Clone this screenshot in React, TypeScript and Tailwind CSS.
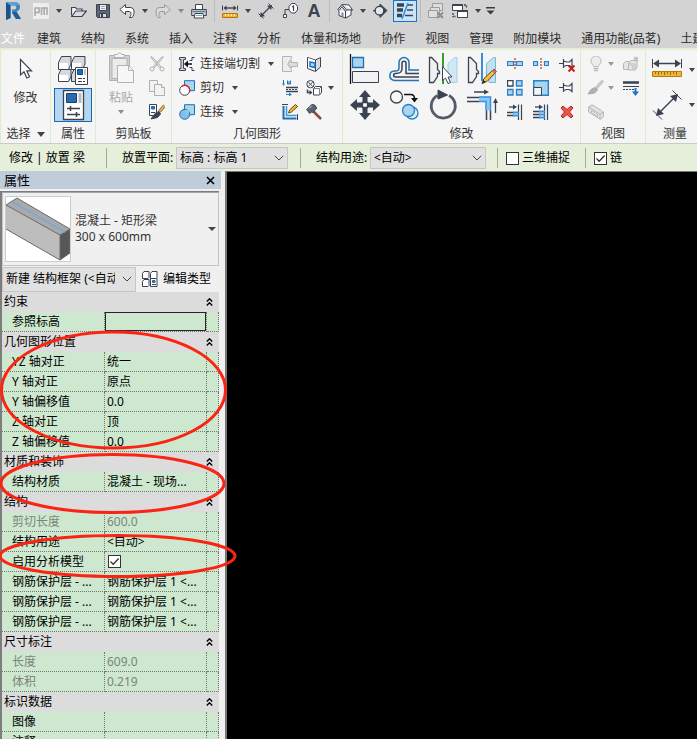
import type { ReactNode } from "react";
import clsx from "clsx";

const INK = "#3b4250";
const BLUE = "#1f6fb5";
const SKY = "#a9d5ee";

/* ---------- shared bits ---------- */

const Svg = ({ size = 16, children }: { size?: number; children: ReactNode }) => (
  <svg width={size} height={size} viewBox={`0 0 ${size} ${size}`} fill="none" stroke={INK} className="shrink-0">
    {children}
  </svg>
);

const Caret = ({ color = "#444444" }: { color?: string }) => (
  <svg width="6" height="4" viewBox="0 0 6 4" className="shrink-0">
    <path d="M0 0h6L3 4z" fill={color} />
  </svg>
);

const Chevron = () => (
  <svg width="10" height="6" viewBox="0 0 10 6" fill="none" stroke="#444444" className="shrink-0">
    <path d="M0.8 0.8L5 5l4.200-4.200" />
  </svg>
);

const IconButton = ({ label, className, children }: { label: string; className?: string; children: ReactNode }) => (
  <button type="button" aria-label={label} className={clsx("flex items-center justify-center", className)}>
    {children}
  </button>
);

const Dropdown = ({ label, value, className }: { label: string; value: string; className?: string }) => (
  <div className={clsx("grid items-center border border-[#c6c6c6] bg-[#e1e1e1]", className)}>
    <select
      aria-label={label}
      className="col-start-1 row-start-1 h-full w-full min-w-0 appearance-none bg-transparent pl-[3px] pr-5 outline-none"
    >
      <option>{value}</option>
    </select>
    <span className="pointer-events-none col-start-1 row-start-1 justify-self-end pr-[3px]">
      <Chevron />
    </span>
  </div>
);

const CheckBox = ({ label, checked = false }: { label: string; checked?: boolean }) => (
  <span className="inline-grid h-[13px] w-[13px] shrink-0 place-items-center">
    <input
      type="checkbox"
      aria-label={label}
      defaultChecked={checked}
      className="peer col-start-1 row-start-1 h-[13px] w-[13px] appearance-none border border-[#333333] bg-white"
    />
    <svg
      viewBox="0 0 11 11"
      fill="none"
      stroke="#333333"
      strokeWidth="1.300"
      className="pointer-events-none invisible col-start-1 row-start-1 h-[11px] w-[11px] peer-checked:visible"
    >
      <path d="M1.500 5.500l2.700 2.700L9.700 2.500" />
    </svg>
  </span>
);

/* ---------- quick access icons ---------- */

const RevitLogo = () => (
  <svg width="18" height="20" viewBox="0 0 18 20">
    <path d="M2 1h8c4 0 6 2 6 5 0 2.500-1.500 4-3.500 4.800L17 18h-5l-4-6.500V8.500h2c1.500 0 2.300-.7 2.300-2S11.500 4.500 10 4.500H6.500V17L2 19z" fill="#3b86c4" />
    <path d="M2 1l4.500 3.500V17L2 19z" fill="#1b5488" />
    <path d="M8 11.500l4.500-.7L17 18h-5z" fill="#205f96" />
    <path d="M2 1h8c3 0 5 1 5.700 3L6.500 4.500z" fill="#5aa3d8" />
  </svg>
);

const PmLogo = () => (
  <svg width="16" height="16" viewBox="0 0 16 16">
    <rect width="16" height="16" rx="1" fill="#eeeeee" />
    <path d="M2 13V5h4v4.500H2M8.500 12V5h5.500v7M11.200 5v7" fill="none" stroke="#ababab" strokeWidth="1.600" />
  </svg>
);

const FolderIcon = () => (
  <Svg>
    <path d="M.5 12.500v-8h4l1 1.500h5.500v2" fill="#f5f5f5" strokeWidth="1.200" />
    <path d="M.7 13.500l4-5.500H15.500l-4.500 5.500z" fill="#d9dde2" strokeWidth="1.200" />
  </Svg>
);

const SaveIcon = () => (
  <Svg>
    <path d="M1.500 1.500h13v13h-12l-1-1z" fill="#5c6879" />
    <path d="M4.500 1.500h7v6h-7z" fill="#f4f4f4" />
    <path d="M6 3.500h4M6 5.500h4" stroke="#9aa1ab" />
    <path d="M4.500 10.500h7v4h-7z" fill="#d9d9d9" />
    <path d="M6 11h2v3H6z" fill={INK} stroke="none" />
  </Svg>
);

const UndoIcon = ({ muted = false }: { muted?: boolean }) => (
  <svg
    width="16"
    height="16"
    viewBox="0 0 16 16"
    stroke={muted ? "#999999" : INK}
    fill={muted ? "#dcdcdc" : "#ffffff"}
    className={clsx(muted && "-scale-x-100")}
  >
    <path d="M.8 6.500L6.500 1.500v3h4.500c3 0 4 2 4 4.500 0 2-.5 4-2 5.500h-2.500c1-1 1.500-2.500 1.500-4 0-1.500-.8-2-2-2H6.500v3z" />
  </svg>
);

const PrintIcon = () => (
  <Svg>
    <path d="M4.500 6V1.500h7V6" fill="#fff" />
    <path d="M.7 6.500h14.600v6H.7z" fill="#d5d9de" />
    <path d="M1.500 8.500h13" stroke="#6d7683" strokeWidth="1.500" />
    <path d="M4 10.500h8l.8 4.500H3.200z" fill="#fff" />
    <path d="M5 12.500h6" stroke="#6fb4d8" />
  </Svg>
);

const RulerSmall = () => (
  <Svg>
    <path d="M2 5h12" strokeWidth="1.400" />
    <path d="M4.500 2.500L1.500 5l3 2.500zM11.500 2.500l3 2.500-3 2.500z" fill={INK} stroke="none" />
    <path d="M.5 2.500v5M15.500 2.500v5" />
    <path d="M.5 10.500h15v4H.5z" fill="#f2b71f" stroke="#b9730c" />
    <path d="M3.500 11v2M6.500 11v2M9.500 11v2M12.500 11v2" stroke="#fff3c8" />
  </Svg>
);

const MeasureSmall = () => (
  <Svg>
    <path d="M3.500 12.500l9-9" strokeWidth="1.300" />
    <path d="M2 14l.8-5 4.200 4.200zM14 2l-5 .8L13.200 7z" fill={INK} stroke="none" />
    <path d="M.5 10.500l5 5M10.500.5l5 5" />
  </Svg>
);

const TagIcon = () => (
  <Svg>
    <path d="M9.500.5h3.500L15.500 3.500v3.500L13 10H9.500L7 7V3.500z" fill="#fff" />
    <path d="M10 4l1.500-1v5" strokeWidth="1.200" />
    <path d="M7 6.500H3v6" />
    <path d="M1.500 11.500h3v3h-3z" fill="#fff" />
  </Svg>
);

const HouseIcon = () => (
  <Svg>
    <path d="M.8 6.500L5 1.500l7 .5 3.500 5-1.500.8V12L8.500 15 2 12.500v-5z" fill="#fff" />
    <path d="M5 1.500L9.500 7l6-.2M9.500 7l-1 1.500V15M2 7.500l3-4 3.500 5" fill="#dbe0e6" />
    <path d="M4.500 9l2 .7v4l-2-.8z" fill="#7f8996" stroke="none" />
  </Svg>
);

const SectionIcon = () => (
  <Svg>
    <path d="M7 1l7 6.500L7 14.500z" fill={INK} />
    <circle cx="6.500" cy="7.700" r="4.300" fill="#e4e6e9" strokeWidth="1.300" />
    <path d="M0 7.700h2.200" strokeWidth="1.300" />
  </Svg>
);

const ThinLines = () => (
  <Svg size={18}>
    <path d="M1 3h7M1 8h6M1 13.500h5" strokeWidth="3.500" />
    <path d="M11 3h6M11 8h6M9 13.500h8" strokeWidth="1.300" />
    <path d="M12 1L6 17" stroke="#2d8fe0" strokeWidth="1.500" />
  </Svg>
);

const CloseHidden = () => (
  <Svg>
    <g stroke="#9b9b9b" fill="#dedede">
      <path d="M4.500.5h10v7h-10z" />
      <path d="M2.500 4.500h9v6h-9z" />
      <path d="M.5 7.500h9v7h-9z" />
    </g>
    <path d="M9.500 9.500l5.500 5.500M15 9.500L9.500 15" stroke="#8d8d8d" strokeWidth="1.800" />
  </Svg>
);

const SwitchWindows = () => (
  <Svg>
    <path d="M.5 1.500h10v6h-10z" fill="#fff" />
    <path d="M.5 2h10" strokeWidth="2" />
    <path d="M5.500 7.500h10v7h-10z" fill="#fff" />
    <path d="M5.500 8h10" strokeWidth="2" />
    <path d="M12 2h2.500v3.500M1 10v3.500h3" strokeDasharray="2 1" strokeWidth="1.300" />
  </Svg>
);

const Slot = ({ label, active, children }: { label: string; active?: boolean; children: ReactNode }) => (
  <IconButton
    label={label}
    className={clsx("h-[22px] w-6 shrink-0", active && "border border-[#1673c9] bg-[#cbe2f7]")}
  >
    {children}
  </IconButton>
);

const More = ({ label, muted }: { label: string; muted?: boolean }) => (
  <IconButton label={label} className="h-[22px] w-3 shrink-0">
    <Caret color={muted ? "#8a8a8a" : undefined} />
  </IconButton>
);

const Divider = () => (
  <span className="flex w-[7px] shrink-0 justify-center">
    <span className="h-[22px] w-px bg-[#bcbcbc]" />
  </span>
);

const QuickAccess = () => (
  <div className="flex h-[22px] items-center pl-px">
    <Slot label="Revit"><RevitLogo /></Slot>
    <span className="w-1 shrink-0" />
    <Slot label="PM"><PmLogo /></Slot>
    <More label="PM 选项" />
    <span className="w-0.5 shrink-0" />
    <Slot label="打开"><FolderIcon /></Slot>
    <Slot label="保存"><SaveIcon /></Slot>
    <Slot label="放弃"><UndoIcon /></Slot>
    <More label="放弃列表" />
    <Slot label="重做"><UndoIcon muted /></Slot>
    <More label="重做列表" muted />
    <Slot label="打印"><PrintIcon /></Slot>
    <Divider />
    <Slot label="测量"><RulerSmall /></Slot>
    <More label="测量选项" />
    <Slot label="对齐尺寸标注"><MeasureSmall /></Slot>
    <Slot label="按类别标记"><TagIcon /></Slot>
    <Slot label="文字">
      <span className="font-['Liberation_Sans'] text-lg leading-[22px] font-bold text-[#3b4250]">A</span>
    </Slot>
    <Divider />
    <Slot label="默认三维视图"><HouseIcon /></Slot>
    <More label="三维视图选项" />
    <Slot label="剖面"><SectionIcon /></Slot>
    <Slot label="细线" active><ThinLines /></Slot>
    <Divider />
    <Slot label="关闭隐藏窗口"><CloseHidden /></Slot>
    <Slot label="切换窗口"><SwitchWindows /></Slot>
    <More label="窗口列表" />
    <IconButton label="自定义快速访问工具栏" className="h-[22px] w-3 shrink-0">
      <svg width="9" height="8" viewBox="0 0 9 8" fill="#3c3c3c">
        <path d="M0 0h9v1.500H0zM0.500 3.500h8l-4 4z" />
      </svg>
    </IconButton>
  </div>
);

const tabs = ["建筑", "结构", "系统", "插入", "注释", "分析", "体量和场地", "协作", "视图", "管理", "附加模块", "通用功能(品茗)", "土建"];

const Tabs = () => (
  <nav className="flex h-[26px] items-center overflow-hidden pt-2 pl-px whitespace-nowrap text-[#2b2b2b]">
    <button type="button" className="mr-3 shrink-0 text-white">文件</button>
    <div className="flex gap-5">
      {tabs.map((tab) => (
        <button type="button" key={tab} className="shrink-0">{tab}</button>
      ))}
    </div>
  </nav>
);

/* ---------- ribbon icons ---------- */

const CursorIcon = () => (
  <svg width="14" height="22" viewBox="0 0 14 22">
    <path d="M1.500 1.500v15.500l3.500-3.200 2.800 6.200 2.700-1.200-2.700-6h4.700z" fill="#fff" stroke={INK} strokeWidth="1.200" />
  </svg>
);

const TypePropsIcon = () => (
  <Svg size={32}>
    <g fill="#d5d8dc" strokeLinejoin="round">
      <path d="M1.500 15.500v-7l3-6h9.500v7.500l-2.500 5.500z" />
      <path d="M14.500 15.500v-7l3-6H28v7.500l-2.500 5.500z" />
      <path d="M1.500 27.500v-7l2.500-5h10v7.500l-2.500 4.500z" />
      <path d="M14.500 27.500v-7l2.500-5h6v12z" />
    </g>
    <path d="M2 9h9v6H2zM15 9h9v6h-9zM2 21h9v6H2z" fill="#fff" stroke="none" />
    <path d="M18.500 13.500h12v17h-12z" fill="#fff" />
    <path d="M20.500 15.500h5v5h-5z" fill={BLUE} stroke="#174c82" />
    <path d="M28 15v6" stroke="#b3b7bd" strokeWidth="1.500" />
    <path d="M21 24.500h7M21 27.500h7" strokeDasharray="4 1" />
  </Svg>
);

const PropsIcon = () => (
  <Svg size={32}>
    <path d="M6.500 1.500h20v29h-20z" fill="#fff" strokeWidth="1.300" />
    <path d="M9.500 4.500h10v9h-10z" fill="#2a6cab" stroke="#173f70" />
    <path d="M21.500 4h3v10h-3z" fill="#b8bcc2" stroke="none" />
    <path d="M10 19.500h13M10 25.500h13M13.500 17v5M19.500 23v5" strokeWidth="1.500" />
  </Svg>
);

const PasteIcon = () => (
  <Svg size={32}>
    <g stroke="#b2b2b2">
      <path d="M4.500 3.500h20v25h-20z" fill="#cfcfcf" />
      <path d="M7 6.500h15v20H7z" fill="#ebebeb" />
      <path d="M9.500 5.500v-3h3l1-1.500h2l1 1.500h3v3z" fill="#f5f5f5" />
      <path d="M12.500 13.500h11l5 5v12h-16z" fill="#f7f7f7" />
      <path d="M23.500 13.500v5h5" />
    </g>
  </Svg>
);

const CutIcon = () => (
  <Svg>
    <g stroke="#b0b0b0">
      <path d="M1.500 1L3 .7l9 10-1.500 1zM14.500 1L13 .7l-9 10 1.500 1z" fill="#e8e8e8" />
      <circle cx="3" cy="13" r="2" fill="#f5f5f5" />
      <circle cx="13" cy="13" r="2" fill="#f5f5f5" />
    </g>
  </Svg>
);

const CopyIcon = () => (
  <Svg>
    <g stroke="#b0b0b0" fill="#f2f2f2">
      <path d="M.5.5h8v11h-8z" />
      <path d="M5.500 4.500h7l3 3v8h-10z" />
      <path d="M12.500 4.500v3h3" />
    </g>
  </Svg>
);

const MatchIcon = () => (
  <Svg>
    <path d="M.5.5h7v11h-7z" fill="#fff" />
    <path d="M2.500 2.500h3v2.500h-3z" fill={BLUE} stroke={BLUE} />
    <path d="M2 8.500h4" />
    <path d="M15.500 1.500L10.500 7.500" stroke="#8a6326" strokeWidth="3.200" />
    <path d="M15.500 1.500L10.500 7.500" stroke="#e6b968" strokeWidth="1.600" />
    <path d="M10 7.500l-3.500 1.500-4.500 6 6.500-1.500 3-3.500z" fill={INK} />
  </Svg>
);

const CopeIcon = () => (
  <Svg>
    <path d="M.5 1.500h6v2h-2v9h2v2h-6v-2h1.500v-9H.5z" fill="#d5d9de" />
    <path d="M15.500 1.500h-2.500v3h-2.500M15.500 14.500h-2.500v-3h-2.500" />
    <path d="M6 8h7" stroke="#111" strokeWidth="1.500" />
    <path d="M9 4.500L5 8l4 3.500z" fill="#111" stroke="none" />
  </Svg>
);

const CutGeomIcon = () => (
  <Svg>
    <path d="M5.500.7h10v10h-10z" fill={SKY} stroke={BLUE} />
    <circle cx="5.700" cy="10.300" r="5" fill="#fff" />
    <path d="M3 6.100a5 5 0 0 1 7.500 5.500" stroke="#e01f1f" strokeWidth="1.400" />
  </Svg>
);

const JoinIcon = () => (
  <Svg>
    <path d="M5.500.7h10v10h-10z" fill={SKY} stroke={BLUE} />
    <circle cx="5.700" cy="10.300" r="5" fill="#7fbfe6" stroke={BLUE} />
    <path d="M6 6h4v4.500H6z" fill="#8dc8ea" stroke="none" />
  </Svg>
);

const WallOpenIcon = () => (
  <Svg>
    <g stroke="#b4b4b4" fill="#ececec">
      <path d="M.5.500h9v2l-3 4v3l3 4v2h-9z" />
      <path d="M5.500 8l4-3.500V6.500h6v4h-6V12z" fill="#dcdcdc" />
    </g>
  </Svg>
);

const SplitFaceIcon = () => (
  <Svg>
    <path d="M1.500 1.500l8 2.500 5-2.500v9.500l-5 4.500-8-3z" fill="#d9dde2" />
    <path d="M9.500 4v11" />
    <path d="M2 2l7 2.300V14.500l-7-2.800z" fill="#fff" stroke="none" />
    <path d="M4 6l5 1v4.500l-5-1z" fill={SKY} stroke="#1473c4" strokeWidth="1.500" />
  </Svg>
);

const BeamJoinIcon = () => (
  <Svg>
    <path d="M1.500 0v4M5.500.5v3.500h3V.5M7 1v3" stroke={BLUE} />
    <path d="M4 7.500h12M4 11.500h12" strokeWidth="1.500" />
    <path d="M4 9.500h12" strokeDasharray="2 1" />
    <path d="M0 3.500h3L1.500 6z" stroke="none" fill="#2b82d0" />
    <path d="M4 14.500h4" stroke="#2b82d0" />
    <path d="M7 12.500l3 2-3 2z" fill="#2b82d0" stroke="none" />
  </Svg>
);

const PaintJoinIcon = () => (
  <Svg>
    <circle cx="4.500" cy="4.200" r="3.700" fill="#fff" />
    <path d="M2 1.700l5 5M7 1.700l-5 5" />
    <path d="M7.500 8.500l2-2h6v6l-2 2.500h-6z" fill="#fff" />
    <path d="M7.500 8.500h6V15M13.500 8.500l2-2" stroke="#7b8390" />
    <path d="M1.500 9.500v3h3" strokeWidth="1.500" />
    <path d="M3.500 10l3 2.500-3 2.500z" fill={INK} stroke="none" />
  </Svg>
);

const WallJoinIcon = () => (
  <Svg>
    <path d="M1.500 2v12.500h13" stroke={BLUE} strokeWidth="2" />
    <path d="M4.500 2v9.500h10" stroke="#3b96de" strokeWidth="1.500" />
    <path d="M0 .5h6M15.500 10v6" />
    <path d="M6.500 9l1-3 6-5.500 2 2-6 5.500z" fill="#f6b52e" stroke="#6a4a15" />
  </Svg>
);

const HammerIcon = () => (
  <Svg>
    <path d="M7.500 7.500l7.500 7.500" stroke="#8a4b3c" strokeWidth="2.500" />
    <path d="M.7 5.500l5-5 3 .5 2 3-1 1.500-3 3-1.500-.5-1.500 1.500z" fill="#5b6370" />
    <path d="M3 4.500l3-3" stroke="#c8cdd4" />
  </Svg>
);

const AlignIcon = () => (
  <Svg size={32}>
    <path d="M1.500 1v30" stroke="#111" strokeWidth="1.300" />
    <path d="M3.500 4.500h11v10h-11z" fill={SKY} stroke={BLUE} strokeWidth="1.300" />
    <path d="M3.500 18.500h26v11h-26z" fill="#f1f2f4" />
  </Svg>
);

const OffsetIcon = () => (
  <Svg size={32}>
    <path d="M31 27.500H6.500c-6.500-1-6-9 0-9.500 4 0 4.500-1 4.500-3.500V9.500a5 5 0 0 1 10 0v7.500h10" stroke="#2373b5" strokeWidth="1.500" fill="#eef4f8" />
    <path d="M31 24H7.500c-2.500 0-2.500-3.500 0-3.500C12.500 20.500 14 19 14 15V10c0-2.500 4-2.500 4 0v10.500h13" stroke={INK} strokeWidth="1.500" fill="#f5f5f5" />
  </Svg>
);

const MirrorPickIcon = () => (
  <Svg size={32}>
    <path d="M2.500 4.500h2l6 6v6l2 2v2h-2v3l-4 6h-4z" fill="#eef0f2" strokeWidth="1.300" />
    <path d="M30 4.500h-2l-7 6v14l3 5h6z" fill="#cfe8f5" stroke="#a7cfe5" />
    <path d="M16 0v31" stroke="#33a32a" strokeWidth="2" />
    <path d="M15.500 13.500v14l3-2.500 2.500 5.500 2.500-1-2.500-5.500h4z" fill="#fff" />
  </Svg>
);

const MirrorDrawIcon = () => (
  <Svg size={32}>
    <path d="M2.500 4.500h2l6 6v6l2 2v2h-2v3l-4 6h-4z" fill="#eef0f2" strokeWidth="1.300" />
    <path d="M29.500 4.500h-2l-7 6v14l3 5h6z" fill="#bfe2f3" stroke="#7bb4d6" />
    <path d="M16 0v28" stroke="#3a8ddb" strokeWidth="2" />
    <path d="M16 30.500l2-5L28 16l2.500 2.500-9.500 10z" fill="#f8bd3e" stroke="#5e4312" />
    <path d="M28 16l2.500 2.500-2 2-2.500-2.500z" fill="#d66a5e" stroke="none" />
    <path d="M16 30.500l1.500-3.500 2 2z" fill="#222" stroke="none" />
  </Svg>
);

const MoveIcon = () => (
  <Svg size={32}>
    <path d="M16 1l6 7h-3.500v5h-5V8H10zM16 31l6-7h-3.500v-5h-5v5H10zM1 16l7-6v3.500h5v5H8V22zM31 16l-7-6v3.500h-5v5h5V22z" fill={INK} stroke="none" />
    <path d="M13.500 13.500h5v5h-5z" fill="#fff" strokeWidth="1.300" />
  </Svg>
);

const CopyCircleIcon = () => (
  <Svg size={32}>
    <circle cx="8.500" cy="8" r="6" fill="#f7f7f7" strokeWidth="1.300" />
    <circle cx="24" cy="24" r="6" fill="#d6edf9" stroke="#2a7fc6" strokeWidth="1.300" />
    <circle cx="20.500" cy="21.500" r="6" fill={SKY} stroke="#2a7fc6" strokeWidth="1.300" />
    <path d="M16 5.500h6.500c2.500 0 4 1.500 4 4" stroke="#111" strokeWidth="1.500" />
    <path d="M23 9h7l-3.500 4.500z" fill="#111" stroke="none" />
  </Svg>
);

const RotateIcon = () => (
  <Svg size={32}>
    <path d="M10.500 6.500A12 12 0 1 0 22 6.500" stroke="#555c68" strokeWidth="2.800" />
    <path d="M11 1l9.500 5-9.500 4z" fill={INK} stroke={INK} />
  </Svg>
);

const TrimIcon = () => (
  <Svg size={32}>
    <path d="M1 8.500h12M1 12.500h12" strokeWidth="1.500" />
    <path d="M13 7.500h12v14h-5v-9h-7z" fill="#8ec7ef" stroke="none" />
    <path d="M13 8h11.500v13.500M13 12.500h7v9" stroke="#3a92e4" strokeWidth="1.500" />
    <path d="M24.500 21.500V31M20.500 21.500V31" strokeWidth="1.500" />
    <path d="M8 3h12M29.500 24V12" strokeWidth="1.300" />
    <path d="M18 .5l5 2.500-5 2.500zM27 14l2.500-5 2.500 5z" fill={INK} stroke="none" />
  </Svg>
);

const SplitIcon = ({ gap = false }: { gap?: boolean }) => (
  <Svg>
    <path d={gap ? "M.5 5.500h4v4h-4zM11.500 5.500h4v4h-4z" : "M.5 5.500h6v4h-6zM9.500 5.500h6v4h-6z"} fill={SKY} stroke="#2a7fc6" strokeWidth="1.200" />
    <path d="M8 2v11.500" stroke="#c83a32" strokeWidth="1.300" strokeDasharray="2 1" />
  </Svg>
);

const PinIcon = ({ off = false }: { off?: boolean }) => (
  <Svg>
    <path d="M0 7.500h4.500M4.500 3v9M4.500 5l3 1h3l2.500-2.500v8L10.500 9.500h-3l-3 1" fill="#fff" strokeWidth="1.200" />
    {off && <path d="M9.500 9.500l6 6M15.500 9.500l-6 6" stroke="#c8201c" strokeWidth="2" />}
  </Svg>
);

const ArrayIcon = () => (
  <Svg>
    <path d="M.5.500h5.500V6H.5z" fill="#fff" strokeWidth="1.300" />
    <path d="M9.500.500H15V6H9.500zM.5 9.500H6V15H.5zM9.500 9.500H15V15H9.500z" fill={SKY} stroke="#2a7fc6" strokeWidth="1.300" />
  </Svg>
);

const ScaleIcon = () => (
  <Svg>
    <path d="M.7.700h14.600v14.600H.7z" fill={SKY} stroke="#2a7fc6" strokeWidth="1.400" />
    <path d="M.7 7.500h7.800v7.800H.7z" fill="#f3f4f5" />
  </Svg>
);

const ExtendIcon = ({ multi = false }: { multi?: boolean }) => (
  <Svg>
    <path d="M14.500.5V16M11.500.5V16" strokeWidth="1.200" />
    <path d="M2 3h5" strokeWidth="1.300" />
    <path d="M6 .5L10 3 6 5.500z" fill={INK} stroke="none" />
    <path d={multi ? "M0 7.500h7M0 10.500h7M0 13.500h7" : "M0 8.500h7M0 11.500h7"} strokeWidth="1.300" />
    <path d={multi ? "M6 7.500h6M6 10.500h6M6 13.500h6" : "M6 8.500h6M6 11.500h6"} stroke="#3594e4" strokeWidth="1.800" />
  </Svg>
);

const DeleteIcon = () => (
  <Svg>
    <path d="M2 4l2-2 4 3.500L12 2l2 2-3.500 4L14 12l-2 2-4-3.500L4 14l-2-2 3.500-4z" fill="#ee5348" stroke="#b32620" />
  </Svg>
);

const BulbIcon = () => (
  <Svg>
    <g stroke="#bdbdbd" fill="#ececec">
      <path d="M5.500 10.500c0-2-2.500-2.500-2.500-5.500a5 5 0 0 1 10 0c0 3-2.500 3.500-2.500 5.500z" />
      <path d="M5.500 12.500h5M6 14.500h4" strokeWidth="1.500" />
    </g>
  </Svg>
);

const BrushIcon = () => (
  <Svg>
    <path d="M15 .5L7.500 9" stroke="#c6c6c6" strokeWidth="3" />
    <path d="M7 7.500l-4 2-3 4.500 6.500-1 3-3z" fill="#b1b1b1" stroke="#a5a5a5" />
  </Svg>
);

const BoxIcon = () => (
  <Svg>
    <g stroke="#b5b5b5" fill="#e4e4e4">
      <path d="M.7 3L4 .7l11.300 7.300v5l-3 2.300L.7 8z" />
      <path d="M.7 3l11.300 7.300 3.300-2.300M12 10.300v5" />
      <path d="M3.500 6.500l6 4v2l-6-4z" fill="#fff" />
    </g>
  </Svg>
);

const ShowHiddenIcon = () => (
  <Svg>
    <g stroke="#b8b8b8" fill="#e6e6e6">
      <path d="M.5 7.500l2.500-2h3v8h-5.500z" />
      <path d="M5.500 7.500l2-3h6.500v7.500l-2 2H5.500z" />
      <path d="M6 8h6v6M8 10h2v4" />
      <path d="M13 .5v5M10.500 3h5M11 1l4 4M15 1l-4 4" />
    </g>
  </Svg>
);

const LineworkIcon = () => (
  <Svg>
    <path d="M0 2.500h16" strokeWidth="2.500" />
    <path d="M0 6.500h16" />
    <path d="M0 9.500h11" strokeDasharray="2 1" />
    <path d="M12.500 8v4" stroke="#1f72c6" strokeWidth="2" />
    <path d="M9 11.500h7L12.500 16z" fill="#1f72c6" stroke="none" />
  </Svg>
);

const RulerIcon = () => (
  <Svg size={32}>
    <path d="M5 9.500h22" strokeWidth="1.500" />
    <path d="M8 5.500l-6 4 6 4zM24 5.500l6 4-6 4z" fill={INK} stroke="none" />
    <path d="M1.500 5v9M30.500 5v9" />
    <path d="M1.500 17.500h29v5h-29z" fill="#f2b72e" stroke="#b57a18" />
    <path d="M4.500 18v2M7.500 18v3M10.500 18v2M13.500 18v3M16.500 18v2M19.500 18v3M22.500 18v2M25.500 18v3" stroke="#a06e12" />
  </Svg>
);

const DimensionIcon = () => (
  <Svg size={32}>
    <path d="M8 24L24 8" strokeWidth="1.400" />
    <path d="M5 27l2-8 6 6zM27 5l-8 2 6 6z" fill={INK} stroke="none" />
    <path d="M2 21.500l9 9M21.500 1.500l9 9" />
  </Svg>
);

/* ---------- ribbon ---------- */

const Panel = ({ title, className, children }: { title: ReactNode; className: string; children: ReactNode }) => (
  <section className={clsx("flex shrink-0 flex-col border-r border-[#dfecc9] pt-0.5", className)}>
    <div className="flex h-[74px] items-start">{children}</div>
    <h2 className="flex h-[18px] items-center justify-center gap-1.5">{title}</h2>
  </section>
);

const Tool = ({ label, className, children }: { label: string; className?: string; children: ReactNode }) => (
  <IconButton label={label} className={clsx("h-6", className)}>{children}</IconButton>
);

const BigTool = ({ label, children }: { label: string; children: ReactNode }) => (
  <IconButton label={label} className="h-[34px] w-[39px]">{children}</IconButton>
);

const TextTool = ({ label, children }: { label: string; children: ReactNode }) => (
  <button type="button" className="flex h-6 items-center text-[#333333]">
    {children}
    <span className="ml-[5px] mr-2">{label}</span>
    <Caret />
  </button>
);

const Ribbon = () => (
  <div className="flex h-24 overflow-hidden border-t-2 border-b border-t-[#e4eed5] border-b-[#c9cfc0] bg-[#f5f5f5] text-[#333333]">
    <Panel title={<>选择 <svg width="8" height="5" viewBox="0 0 8 5"><path d="M0 0h8L4 5z" fill="#444444" /></svg></>} className="w-[51px] border-l">
      <button type="button" className="flex w-full flex-col items-center gap-2.5 pt-1.5">
        <CursorIcon />
        <span className="leading-4">修改</span>
      </button>
    </Panel>

    <Panel title="属性" className="w-[45px]">
      <div className="flex w-full flex-col items-center">
        <IconButton label="类型属性" className="h-9 w-[38px]"><TypePropsIcon /></IconButton>
        <IconButton label="属性" className="h-[34px] w-[38px] border border-[#1768b8] bg-[#b6d6f0]">
          <PropsIcon />
        </IconButton>
      </div>
    </Panel>

    <Panel title="剪贴板" className="w-[76px]">
      <button type="button" className="flex w-[50px] flex-col items-center text-[#a8a8a8]">
        <PasteIcon />
        <span className="mt-1.5 mb-1 leading-4">粘贴</span>
        <Caret color="#8c8c8c" />
      </button>
      <div className="flex flex-col px-[3px]">
        <Tool label="剪切到剪贴板"><CutIcon /></Tool>
        <Tool label="复制到剪贴板"><CopyIcon /></Tool>
        <Tool label="匹配类型属性"><MatchIcon /></Tool>
      </div>
    </Panel>

    <Panel title="几何图形" className="w-[171px]">
      <div className="flex w-[103px] flex-col items-start pl-[7px]">
        <TextTool label="连接端切割"><CopeIcon /></TextTool>
        <TextTool label="剪切"><CutGeomIcon /></TextTool>
        <TextTool label="连接"><JoinIcon /></TextTool>
      </div>
      <div className="ml-[3px] flex w-6 flex-col">
        <Tool label="墙洞口"><WallOpenIcon /></Tool>
        <Tool label="梁/柱连接"><BeamJoinIcon /></Tool>
        <Tool label="墙连接"><WallJoinIcon /></Tool>
      </div>
      <div className="flex w-9 flex-col items-start pl-1">
        <Tool label="拆分面"><SplitFaceIcon /></Tool>
        <Tool label="填色" className="gap-1.5"><PaintJoinIcon /><Caret /></Tool>
        <Tool label="拆除"><HammerIcon /></Tool>
      </div>
    </Panel>

    <Panel title="修改" className="w-[238px]">
      <div className="grid grid-cols-4 gap-y-0.5 pl-0.5">
        <BigTool label="对齐"><AlignIcon /></BigTool>
        <BigTool label="偏移"><OffsetIcon /></BigTool>
        <BigTool label="镜像 - 拾取轴"><MirrorPickIcon /></BigTool>
        <BigTool label="镜像 - 绘制轴"><MirrorDrawIcon /></BigTool>
        <BigTool label="移动"><MoveIcon /></BigTool>
        <BigTool label="复制"><CopyCircleIcon /></BigTool>
        <BigTool label="旋转"><RotateIcon /></BigTool>
        <BigTool label="修剪/延伸为角"><TrimIcon /></BigTool>
      </div>
      <div className="grid flex-1 grid-cols-3 pl-px">
        <Tool label="拆分图元"><SplitIcon /></Tool>
        <Tool label="用间隙拆分"><SplitIcon gap /></Tool>
        <Tool label="解锁"><PinIcon off /></Tool>
        <Tool label="阵列"><ArrayIcon /></Tool>
        <Tool label="缩放"><ScaleIcon /></Tool>
        <Tool label="锁定"><PinIcon /></Tool>
        <Tool label="修剪/延伸单个图元"><ExtendIcon /></Tool>
        <Tool label="修剪/延伸多个图元"><ExtendIcon multi /></Tool>
        <Tool label="删除"><DeleteIcon /></Tool>
      </div>
    </Panel>

    <Panel title="视图" className="w-[65px]">
      <div className="flex w-[42px] flex-col items-start pl-[7px]">
        <Tool label="隐藏" className="gap-1"><BulbIcon /><Caret color="#999999" /></Tool>
        <Tool label="替换图形" className="gap-1"><BrushIcon /><Caret color="#999999" /></Tool>
        <Tool label="选择框"><BoxIcon /></Tool>
      </div>
      <div className="flex flex-col">
        <Tool label="显示隐藏"><ShowHiddenIcon /></Tool>
        <Tool label="线处理"><LineworkIcon /></Tool>
      </div>
    </Panel>

    <Panel title="测量" className="w-[58px] border-r-0">
      <div className="flex flex-col pl-[5px]">
        <IconButton label="测量" className="h-[35px] gap-1.5"><RulerIcon /><Caret /></IconButton>
        <IconButton label="对齐标注" className="h-[35px] gap-1.5"><DimensionIcon /><Caret /></IconButton>
      </div>
    </Panel>
  </div>
);

/* ---------- options bar ---------- */

const Bar = () => <span className="h-5 w-px shrink-0 bg-[#a3a99b]" />;

const OptionsBar = () => (
  <div className="flex h-[27px] items-center overflow-hidden bg-[#e5efd9] pt-px pl-[9px] whitespace-nowrap text-black">
    <span className="w-[97px] shrink-0">修改 | 放置 梁</span>
    <Bar />
    <span className="ml-[15px] w-[54px] shrink-0">放置平面:</span>
    <Dropdown label="放置平面" value="标高 : 标高 1" className="h-[22px] w-28 shrink-0" />
    <span className="w-3 shrink-0" />
    <Bar />
    <span className="ml-[15px] w-[54px] shrink-0">结构用途:</span>
    <Dropdown label="结构用途" value="<自动>" className="h-[22px] w-[116px] shrink-0" />
    <span className="w-[11px] shrink-0" />
    <Bar />
    <label className="mr-[15px] ml-2 flex shrink-0 items-center gap-[3px]">
      <CheckBox label="三维捕捉" />
      三维捕捉
    </label>
    <Bar />
    <label className="ml-2 flex shrink-0 items-center gap-[3px]">
      <CheckBox label="链" checked />
      链
    </label>
  </div>
);

/* ---------- properties palette ---------- */

type Prop = { name: string; value?: string; muted?: boolean; kind?: "input" | "check" };

const groups: { title: string; props: Prop[] }[] = [
  { title: "约束", props: [{ name: "参照标高", kind: "input" }] },
  {
    title: "几何图形位置",
    props: [
      { name: "YZ 轴对正", value: "统一" },
      { name: "Y 轴对正", value: "原点" },
      { name: "Y 轴偏移值", value: "0.0" },
      { name: "Z 轴对正", value: "顶" },
      { name: "Z 轴偏移值", value: "0.0" },
    ],
  },
  { title: "材质和装饰", props: [{ name: "结构材质", value: "混凝土 - 现场..." }] },
  {
    title: "结构",
    props: [
      { name: "剪切长度", value: "600.0", muted: true },
      { name: "结构用途", value: "<自动>" },
      { name: "启用分析模型", kind: "check" },
      { name: "钢筋保护层 - ...", value: "钢筋保护层 1 <..." },
      { name: "钢筋保护层 - ...", value: "钢筋保护层 1 <..." },
      { name: "钢筋保护层 - ...", value: "钢筋保护层 1 <..." },
    ],
  },
  {
    title: "尺寸标注",
    props: [
      { name: "长度", value: "609.0", muted: true },
      { name: "体积", value: "0.219", muted: true },
    ],
  },
  { title: "标识数据", props: [{ name: "图像" }, { name: "注释" }] },
];

const BeamPreview = () => (
  <svg width="64" height="64" viewBox="0 0 64 64">
    <path d="M0 8l54 30v25L0 32z" fill="#bdbdbd" />
    <path d="M0 8L11 1l53 31-10 6z" fill="#a9a9a9" />
    <path d="M54 38l10-6v24l-10 7z" fill="#575757" />
    <path d="M0 8l54 30 10-6M54 38v25M0 8L11 1l53 31v24l-10 7L0 32" fill="none" stroke="#6a6a6a" />
    <path d="M6 4.500L59 35" stroke="#79a9da" strokeWidth="1.500" />
  </svg>
);

const EditTypeIcon = () => (
  <svg width="16" height="16" viewBox="0 0 16 16" fill="#fff" stroke={INK}>
    <path d="M.5 2.500l1.500-2h5v6l-1 1H.5zM8.500 2.500l1.500-2h5v6l-1 1H8.500zM.5 10.500l1.500-2h5v6l-1 1H.5z" />
    <path d="M8.500 7.500h6.500v8H8.500z" />
    <path d="M10.500 9.500h2.500v2h-2.500z" fill={BLUE} stroke={BLUE} />
    <path d="M10 13.500h4" />
  </svg>
);

const Collapse = () => (
  <svg width="7" height="8" viewBox="0 0 7 8" fill="none" stroke="#000" strokeWidth="1.400" className="shrink-0">
    <path d="M.8 3.500l2.700-2.700 2.700 2.700M.8 7.500l2.700-2.700 2.700 2.700" />
  </svg>
);

const PropValue = ({ prop }: { prop: Prop }) => {
  if (prop.kind === "input") {
    return (
      <input
        aria-label={prop.name}
        className="block h-[19px] w-full border border-[#2e1f33] bg-[#cde8cf] px-0.5 outline-none"
      />
    );
  }
  if (prop.kind === "check") {
    return (
      <div className="flex items-center pl-[3px]">
        <CheckBox label={prop.name} checked />
      </div>
    );
  }
  return <div className="pl-0.5">{prop.value}</div>;
};

const dotted = "border-dotted border-[#6f756f]";

const Properties = () => (
  <aside className="w-[221px] shrink-0 bg-[#f0f0f0] text-black">
    <header className="flex h-[18px] items-center justify-between bg-[#bfcddb] pr-1.5 pl-1">
      <h2 className="text-[13px] leading-4">属性</h2>
      <IconButton label="关闭">
        <svg width="9" height="9" viewBox="0 0 9 9" stroke="#000" strokeWidth="1.600">
          <path d="M1 1l7 7M8 1L1 8" />
        </svg>
      </IconButton>
    </header>

    <div className="mt-0.5 mr-0.5 border-t border-l-2 border-[#7d7d7d]">
      <button
        type="button"
        className="flex h-[74px] w-full items-center border border-[#c4c4c4] border-t-[#a5a5a5] px-0.5 text-left text-[#333333]"
      >
        <span className="border border-[#cccccc] bg-white"><BeamPreview /></span>
        <span className="ml-1 flex-1 leading-4">
          混凝土 - 矩形梁
          <br />
          300 x 600mm
        </span>
        <svg width="8" height="4" viewBox="0 0 8 4"><path d="M0 0h8L4 4z" fill="#444444" /></svg>
      </button>

      <div className="flex h-[26px] items-center">
        <Dropdown label="类型过滤器" value="新建 结构框架 (<自动>)" className="h-[25px] w-[134px]" />
        <button type="button" className="ml-1.5 flex items-center gap-[5px]">
          <EditTypeIcon />
          编辑类型
        </button>
      </div>

      <table className="w-full table-fixed border-separate border-spacing-0 text-left leading-4">
        <colgroup>
          <col className="w-[103px]" />
          <col />
          <col className="w-[12px]" />
        </colgroup>
        {groups.map((group) => (
          <tbody key={group.title}>
            <tr className="h-5 bg-[#dcdcdc]">
              <th colSpan={3} className="pr-1.5 pl-0.5 font-normal">
                <div className="flex items-center justify-between">
                  {group.title}
                  <IconButton label={`折叠${group.title}`}><Collapse /></IconButton>
                </div>
              </th>
            </tr>
            {group.props.map((prop, i) => (
              <tr key={i} className={clsx("h-5 bg-[#cde8cf] whitespace-nowrap", prop.muted && "text-[#7b857c]")}>
                <th className={clsx("border-r border-b pl-2.5 font-normal", dotted)}>{prop.name}</th>
                <td className={clsx("border-r border-b", dotted)}><PropValue prop={prop} /></td>
                <td className={clsx("border-r border-b", dotted)} />
              </tr>
            ))}
          </tbody>
        ))}
      </table>
    </div>
  </aside>
);

/* red pen marks drawn over the palette */
const Markup = () => (
  <svg
    width="240"
    height="420"
    viewBox="0 171 240 420"
    fill="none"
    stroke="#fb2413"
    strokeWidth="3"
    className="pointer-events-none absolute top-0 left-0"
  >
    <ellipse cx="113.500" cy="390" rx="112" ry="58" />
    <ellipse cx="112.500" cy="483.500" rx="111.500" ry="29" />
    <ellipse cx="117.500" cy="556" rx="117.500" ry="20.500" />
  </svg>
);

export default function App() {
  return (
    <div className="flex h-screen flex-col overflow-hidden bg-[#f0f0f0] font-['Noto_Sans','Noto_Sans_CJK_SC',sans-serif] text-xs">
      <div className="shrink-0 bg-[#d3d3d3]">
        <QuickAccess />
        <Tabs />
      </div>
      <div className="shrink-0">
        <Ribbon />
        <OptionsBar />
      </div>
      <div className="relative flex min-h-0 flex-1">
        <Properties />
        <main className="ml-1 flex-1 border-t border-l-2 border-[#787878] bg-black" />
        <Markup />
      </div>
    </div>
  );
}
